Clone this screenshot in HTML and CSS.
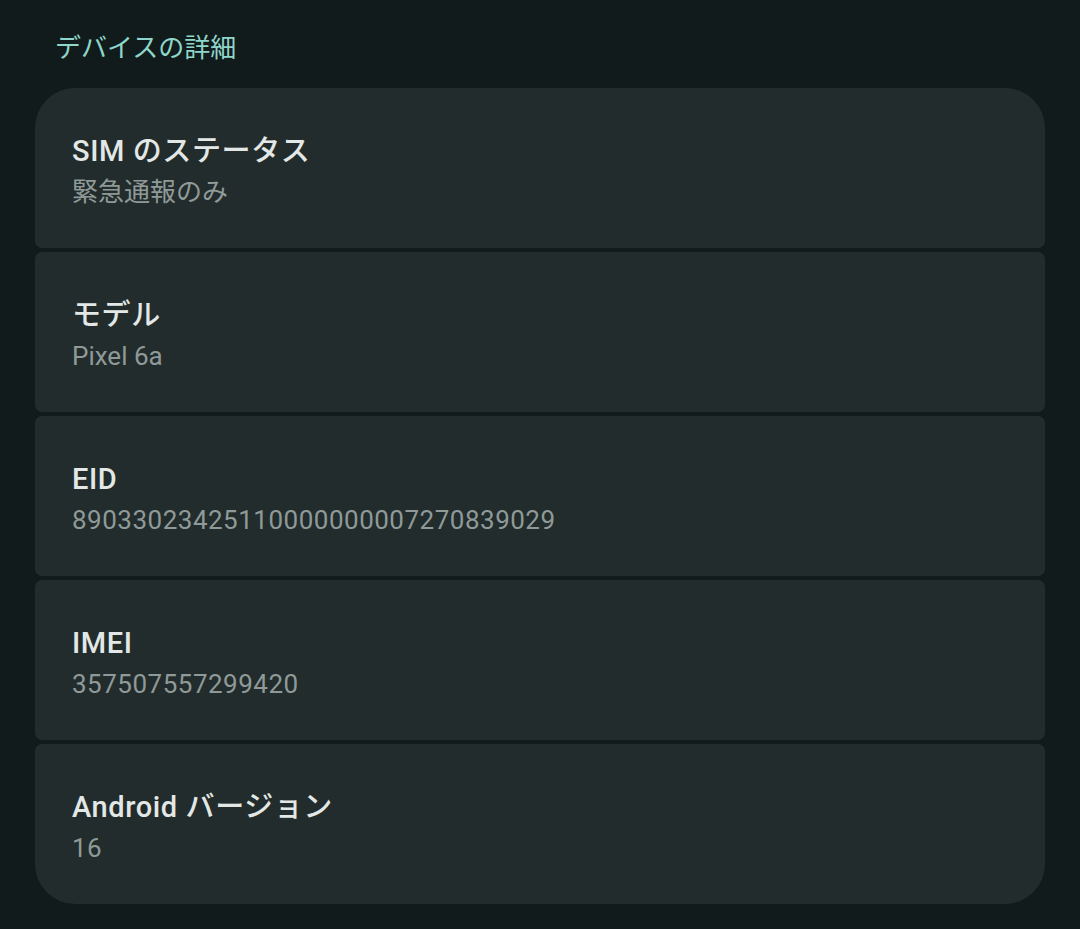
FILE: index.html
```html
<!DOCTYPE html>
<html lang="ja">
<head>
<meta charset="utf-8">
<link rel="stylesheet" href="styles.css">
</head>
<body>
<main class="page">
  <h2 class="section-title">デバイスの詳細</h2>
  <div class="list">
    <div class="item item-first">
      <div class="item-title">SIM のステータス</div>
      <div class="item-sub">緊急通報のみ</div>
    </div>
    <div class="item">
      <div class="item-title">モデル</div>
      <div class="item-sub">Pixel 6a</div>
    </div>
    <div class="item">
      <div class="item-title">EID</div>
      <div class="item-sub num">89033023425110000000007270839029</div>
    </div>
    <div class="item">
      <div class="item-title">IMEI</div>
      <div class="item-sub num">357507557299420</div>
    </div>
    <div class="item item-last">
      <div class="item-title">Android バージョン</div>
      <div class="item-sub num">16</div>
    </div>
  </div>
</main>
</body>
</html>
```

FILE: styles.css
```css
html, body {
  margin: 0;
  padding: 0;
  background: #111b1b;
}
body {
  font-family: "Roboto", "Noto Sans CJK JP", sans-serif;
  width: 1080px;
  height: 929px;
  overflow: hidden;
}
.page {
  padding: 0 35px;
}
.section-title {
  margin: 0;
  padding: 28px 0 0 20px;
  height: 88px;
  box-sizing: border-box;
  font-size: 26px;
  line-height: 36px;
  font-weight: 400;
  color: #8fd6ca;
  font-family: "Noto Sans CJK JP", sans-serif;
}
.list {
  display: flex;
  flex-direction: column;
  gap: 4px;
}
.item {
  height: 160px;
  box-sizing: border-box;
  padding: 44px 37px 0;
  background: #222c2c;
  border-radius: 7px;
}
.item-first {
  border-radius: 40px 40px 7px 7px;
}
.item-last {
  border-radius: 7px 7px 40px 40px;
}
.item-title {
  font-size: 29px;
  line-height: 38px;
  font-weight: 500;
  letter-spacing: 0.6px;
  color: #e3e8e6;
}
.item-sub {
  font-size: 26px;
  line-height: 44px;
  color: #8f9a98;
}
.num {
  letter-spacing: 0.5px;
}
```
